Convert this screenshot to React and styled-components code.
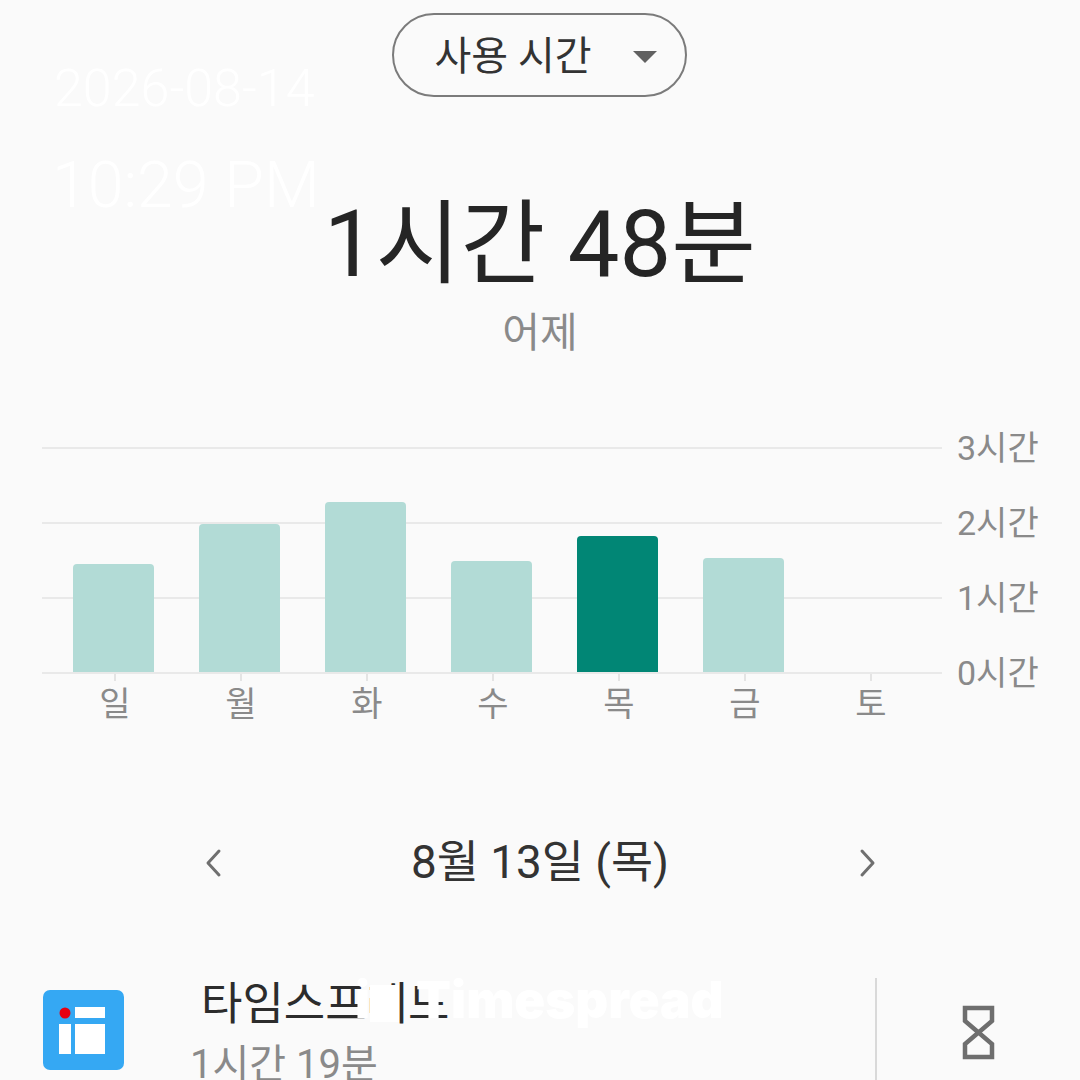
import React from 'react'
import styled, { createGlobalStyle } from 'styled-components'

const FONT = `Roboto, "Noto Sans CJK KR", sans-serif`

const GlobalStyle = createGlobalStyle`
  html, body {
    margin: 0;
    padding: 0;
    background: #fafafa;
  }
  body {
    font-family: ${FONT};
    color: #252525;
  }
`

const Page = styled.div`
  position: relative;
  width: 1080px;
  height: 1080px;
  overflow: hidden;
  background: #fafafa;
  display: flex;
  flex-direction: column;
  align-items: center;
  padding-top: 13px;
  box-sizing: border-box;
  & > * {
    flex-shrink: 0;
  }
`

const Dropdown = styled.div`
  width: 295px;
  height: 84px;
  margin-right: 2px;
  box-sizing: border-box;
  border: 2px solid #7b7b7b;
  border-radius: 42px;
  display: flex;
  align-items: center;
  padding: 0 0 5px 41px;
  gap: 41px;
  font-size: 40px;
  color: #333;
`

const Caret = styled.span`
  width: 0;
  height: 0;
  border-left: 12px solid transparent;
  border-right: 12px solid transparent;
  border-top: 12px solid #616161;
  margin-top: 9px;
`

const Total = styled.div`
  margin-top: 90px;
  font-size: 92px;
  line-height: 116px;
  color: #252525;
  white-space: nowrap;
`

const Sub = styled.div`
  font-size: 41px;
  line-height: 56px;
  margin-top: 2px;
  color: #8a8a8a;
`

const Chart = styled.div`
  position: relative;
  align-self: stretch;
  margin-top: 86px;
  padding-left: 42px;
`

const Rows = styled.div`
  display: flex;
  flex-direction: column;
`

const Row = styled.div`
  display: flex;
  height: 75px;
  &:last-child {
    height: 2px;
  }
`

const Line = styled.div`
  width: 900px;
  height: 2px;
  background: #e9e9e9;
  flex: none;
`

const AxisLabel = styled.div`
  margin-left: 15px;
  font-size: 34px;
  line-height: 2px;
  height: 2px;
  color: #8a8a8a;
  white-space: nowrap;
`

const Bars = styled.div`
  position: absolute;
  left: 50.5px;
  top: 0;
  height: 225px;
  display: flex;
  align-items: flex-end;
`

const BarSlot = styled.div`
  width: 126px;
  flex: none;
  display: flex;
  justify-content: center;
`

const Bar = styled.div`
  width: 81px;
  flex: none;
  border-radius: 4px 4px 0 0;
  background: ${(p) => (p.$active ? '#018675' : '#b2dbd6')};
`

const Days = styled.div`
  display: flex;
  margin-left: 10px;
`

const Day = styled.div`
  position: relative;
  width: 126px;
  padding-top: 10px;
  text-align: center;
  font-size: 34px;
  line-height: 40px;
  color: #8a8a8a;
  &::before {
    content: '';
    position: absolute;
    top: 0;
    left: 62px;
    width: 2px;
    height: 7px;
    background: #e4e4e4;
  }
`

const DateNav = styled.div`
  display: flex;
  align-items: center;
  justify-content: space-between;
  width: 676px;
  margin-top: 109px;
`

const DateLabel = styled.div`
  font-size: 45.8px;
  line-height: 60px;
  color: #333;
  white-space: nowrap;
`

const Chevron = styled.svg`
  width: 22px;
  height: 30px;
  fill: none;
  stroke: #6f6f6f;
  stroke-width: 3;
  stroke-linecap: round;
  stroke-linejoin: round;
`

const AppRow = styled.div`
  align-self: stretch;
  display: flex;
  align-items: flex-start;
  margin-top: 85px;
`

const AppIcon = styled.svg`
  width: 81px;
  height: 81px;
  flex: none;
  margin-left: 43px;
  margin-top: 12px;
`

const AppText = styled.div`
  width: 751px;
  flex: none;
  padding: 3px 0 0 66px;
  box-sizing: border-box;
`

const AppName = styled.div`
  font-size: 45px;
  line-height: 48px;
  padding-left: 11px;
  color: #2c2c2c;
`

const AppTime = styled.div`
  font-size: 40px;
  line-height: 50px;
  margin-top: 11px;
  color: #8a8a8a;
  white-space: nowrap;
`

const Divider = styled.div`
  width: 2px;
  height: 110px;
  background: #d9d9d9;
  flex: none;
`

const Hourglass = styled.svg`
  width: 33px;
  height: 55px;
  margin-left: 85px;
  margin-top: 27px;
  flex: none;
  fill: none;
  stroke: #6e6e6e;
  stroke-width: 4.5;
`

// white stamp text burned on top of the screenshot
const Stamp = styled.div`
  position: absolute;
  left: ${(p) => p.$x}px;
  top: ${(p) => p.$y}px;
  font-family: Roboto, sans-serif;
  font-size: ${(p) => p.$size}px;
  font-weight: 300;
  line-height: 1;
  color: #ffffff;
  white-space: nowrap;
`

const Brand = styled.div`
  position: absolute;
  left: 355px;
  top: 970px;
  display: flex;
  align-items: flex-start;
  font-family: Inter, sans-serif;
  font-size: 51px;
  font-weight: 900;
  line-height: 60px;
  color: #ffffff;
  white-space: nowrap;
`

const BrandBlock = styled.span`
  width: 29px;
  height: 37px;
  margin: 15px 17px 0 0;
  background: #ffffff;
  flex: none;
`

const axis = ['3시간', '2시간', '1시간', '0시간']

const week = [
  { day: '일', height: 108 },
  { day: '월', height: 148 },
  { day: '화', height: 170 },
  { day: '수', height: 111 },
  { day: '목', height: 136, active: true },
  { day: '금', height: 114 },
  { day: '토', height: 0 },
]

export default function App() {
  return (
    <Page>
      <GlobalStyle />
      <Dropdown>
        <span>사용 시간</span>
        <Caret />
      </Dropdown>
      <Total>1시간 48분</Total>
      <Sub>어제</Sub>

      <Chart>
        <Rows>
          {axis.map((label) => (
            <Row key={label}>
              <Line />
              <AxisLabel>{label}</AxisLabel>
            </Row>
          ))}
        </Rows>
        <Bars>
          {week.map((d) => (
            <BarSlot key={d.day}>
              <Bar $active={d.active} style={{ height: d.height }} />
            </BarSlot>
          ))}
        </Bars>
        <Days>
          {week.map((d) => (
            <Day key={d.day}>{d.day}</Day>
          ))}
        </Days>
      </Chart>

      <DateNav>
        <Chevron viewBox="0 0 22 30">
          <path d="M17 3 L6 15 L17 27" />
        </Chevron>
        <DateLabel>8월 13일 (목)</DateLabel>
        <Chevron viewBox="0 0 22 30">
          <path d="M6 3 L17 15 L6 27" />
        </Chevron>
      </DateNav>

      <AppRow>
        <AppIcon viewBox="0 0 81 81">
          <rect width="81" height="80" rx="7" fill="#35a8f3" />
          <rect x="32" y="17" width="30" height="11" fill="#fff" />
          <rect x="16" y="34" width="12" height="30" fill="#fff" />
          <rect x="32" y="34" width="30" height="30" fill="#fff" />
          <circle cx="22" cy="23" r="5.5" fill="#e60012" />
        </AppIcon>
        <AppText>
          <AppName>타임스프레드</AppName>
          <AppTime>1시간 19분</AppTime>
        </AppText>
        <Divider />
        <Hourglass viewBox="0 0 33 55">
          <path d="M3 3 H30 V16 L16.5 27.5 L30 39 V52 H3 V39 L16.5 27.5 L3 16 Z" />
        </Hourglass>
      </AppRow>

      <Stamp $x={54} $y={63} $size={52}>2026-08-14</Stamp>
      <Stamp $x={52} $y={153} $size={64.5}>10:29 PM</Stamp>
      <Brand>
        <span>i</span>
        <BrandBlock />
        <span>Timespread</span>
      </Brand>
    </Page>
  )
}
